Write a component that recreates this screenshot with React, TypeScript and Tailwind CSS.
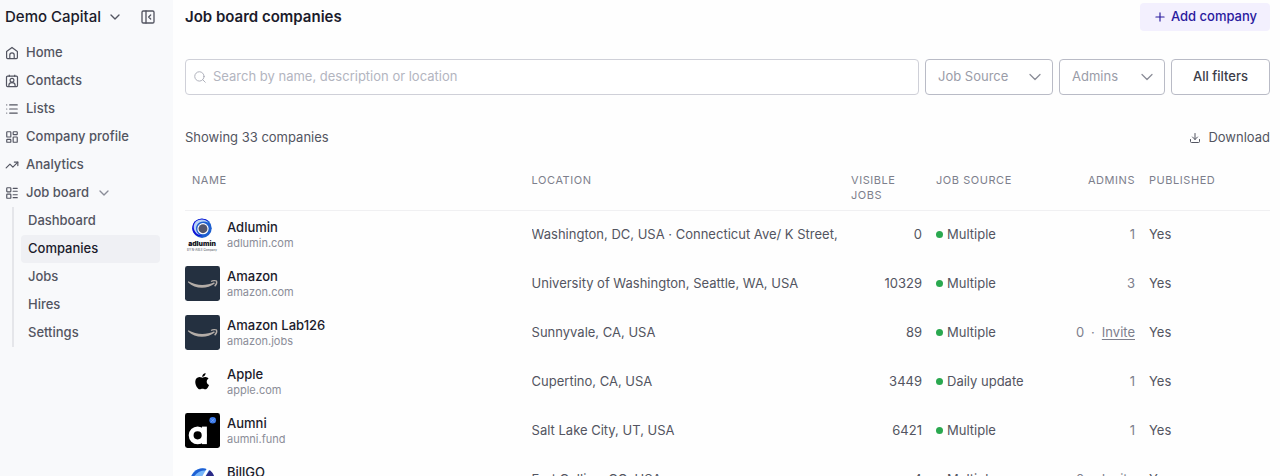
import type { ReactNode } from "react";
import {
  ChevronDown,
  Download,
  LayoutDashboard,
  LayoutList,
  List,
  PanelLeftClose,
  Plus,
  Search,
  TrendingUp,
} from "lucide-react";
import type { LucideIcon } from "lucide-react";

function HomeIcon() {
  return (
    <svg viewBox="0 0 14 14" className="size-3.5" fill="none" stroke="currentColor" strokeWidth="1.2" strokeLinejoin="round">
      <path d="M1.600 5.400 7 1.400l5.400 4v6.200a1 1 0 0 1-1 1H2.600a1 1 0 0 1-1-1Z" />
      <path d="M4.800 12.600V9a2.200 2.200 0 0 1 4.400 0v3.600" />
    </svg>
  );
}

function ContactsIcon() {
  return (
    <svg viewBox="0 0 14 14" className="size-3.5" fill="none" stroke="currentColor" strokeWidth="1.2" strokeLinejoin="round">
      <rect x="1.500" y="2.200" width="11" height="10.400" rx="1" />
      <path d="M4.300 .8v2M9.700 .8v2" />
      <circle cx="7" cy="6.200" r="1.900" />
      <path d="M3.900 12.200V11c0-1.400 1.300-2.300 3.100-2.300s3.100.9 3.100 2.300v1.200" />
    </svg>
  );
}

function LucideGlyph({ icon: Icon }: { icon: LucideIcon }) {
  return <Icon className="size-3.5" strokeWidth={2} />;
}

function AdluminLogo() {
  return (
    <svg viewBox="0 0 36 36" className="size-[35px]">
      <circle cx="17.500" cy="11.500" r="10" fill="#1d5fd0" />
      <path d="M7.500 11.500C7.500 3 17 -1 24.500 4.300 19 2.500 13 4.500 11.500 10c-1 5 2 9 6.500 9.500-5 1.500-10.500-2.500-10.500-8Z" fill="#1010d8" />
      <path d="M11 5c4-3.500 10-3 13 .8-4-2-9-1.500-11.500 2.200-2.500 4-.5 9 3.500 10.700-6-.7-9.500-8.700-5-13.700Z" fill="#b9d3f7" />
      <circle cx="18.500" cy="12" r="5.800" fill="#fff" />
      <circle cx="18.500" cy="12" r="4.600" fill="#53556b" />
      <text x="17.500" y="30" textAnchor="middle" fontSize="7" fontWeight="900" fill="#15151d">adlumin</text>
      <text x="17.500" y="34.500" textAnchor="middle" fontSize="3" fontWeight="600" fill="#777983">BY N-ABLE Company</text>
    </svg>
  );
}

function AmazonLogo() {
  return (
    <svg viewBox="0 0 36 36" className="size-[35px]">
      <rect width="36" height="36" rx="2.500" fill="#243040" />
      <path d="M3.300 15.700c8.400 4.700 18.500 5 26.700 1l.7 1.300C22.500 24.200 10.500 24 3 16.700Z" fill="#b3aca7" />
      <path d="M26.800 16c1.800-1.200 4.700-1.200 5.600-.5.500 1.200-.2 3.700-1.900 5.300" fill="none" stroke="#b3aca7" strokeWidth="1.400" />
    </svg>
  );
}

function AppleLogo() {
  return (
    <svg viewBox="0 0 36 36" className="size-[35px]">
      <g transform="translate(6.500 6.500) scale(.93)">
        <path d="M17.050 20.280c-.98.950-2.050.8-3.080.350-1.090-.46-2.090-.48-3.240 0-1.440.620-2.200.440-3.060-.350C2.790 15.250 3.510 7.590 9.050 7.310c1.350.070 2.290.740 3.080.8 1.180-.24 2.310-.93 3.570-.84 1.510.120 2.650.720 3.400 1.800-3.120 1.870-2.380 5.980.480 7.130-.570 1.500-1.310 2.990-2.540 4.090ZM12.030 7.250C11.880 5.020 13.690 3.180 15.770 3c.290 2.580-2.340 4.500-3.740 4.250Z" />
      </g>
    </svg>
  );
}

function AumniLogo() {
  return (
    <svg viewBox="0 0 36 36" className="size-[35px]">
      <rect width="36" height="36" rx="2.500" fill="#000" />
      <circle cx="13" cy="23" r="6.700" fill="none" stroke="#fff" strokeWidth="5" />
      <rect x="17.500" y="14" width="5" height="18" fill="#fff" />
      <circle cx="28.500" cy="7.500" r="3.400" fill="#3978e8" />
      <path d="m26.500 5.500 4 4m0-4-4 4" stroke="#8bb4f5" strokeWidth=".6" />
    </svg>
  );
}

function BillGoLogo() {
  return (
    <svg viewBox="0 0 36 36" className="size-[35px]">
      <circle cx="18" cy="19" r="12.500" fill="#2f7de6" />
      <path d="M6 17C8 9 15 5 22 7.200L10 23Z" fill="#1f5fd2" />
      <path d="M9.500 14.500c4-5 9-6.500 13-5.500l-7 8Z" fill="#76b6fa" />
      <path d="m18 19 7.500-10.500C29 11 30.500 15 30.500 19Z" fill="#2b2a86" />
      <path d="m15 19 8-13 2.500 1L18 20Z" fill="#fff" />
    </svg>
  );
}

type Company = {
  name: string;
  site: string;
  logo: ReactNode;
  location: string;
  jobs: number;
  source: string;
  admins: number;
};

const companies: Company[] = [
  { name: "Adlumin", site: "adlumin.com", logo: <AdluminLogo />, location: "Washington, DC, USA · Connecticut Ave/ K Street, Washington", jobs: 0, source: "Multiple", admins: 1 },
  { name: "Amazon", site: "amazon.com", logo: <AmazonLogo />, location: "University of Washington, Seattle, WA, USA", jobs: 10329, source: "Multiple", admins: 3 },
  { name: "Amazon Lab126", site: "amazon.jobs", logo: <AmazonLogo />, location: "Sunnyvale, CA, USA", jobs: 89, source: "Multiple", admins: 0 },
  { name: "Apple", site: "apple.com", logo: <AppleLogo />, location: "Cupertino, CA, USA", jobs: 3449, source: "Daily update", admins: 1 },
  { name: "Aumni", site: "aumni.fund", logo: <AumniLogo />, location: "Salt Lake City, UT, USA", jobs: 6421, source: "Multiple", admins: 1 },
  { name: "BillGO", site: "billgo.com", logo: <BillGoLogo />, location: "Fort Collins, CO, USA", jobs: 4, source: "Multiple", admins: 0 },
];

const navItems: { label: string; icon: ReactNode }[] = [
  { label: "Home", icon: <HomeIcon /> },
  { label: "Contacts", icon: <ContactsIcon /> },
  { label: "Lists", icon: <LucideGlyph icon={List} /> },
  { label: "Company profile", icon: <LucideGlyph icon={LayoutDashboard} /> },
  { label: "Analytics", icon: <LucideGlyph icon={TrendingUp} /> },
];

const boardItems = ["Dashboard", "Companies", "Jobs", "Hires", "Settings"];

function Sidebar() {
  return (
    <aside className="w-[173px] shrink-0 bg-[#f8f9fb] text-[13px] font-medium text-[#535561]">
      <div className="flex h-[34px] items-center pr-[17px] pl-[5px]">
        <button className="flex items-center gap-1.5 text-[15px] whitespace-nowrap text-[#1b1b2b]">
          Demo Capital
          <ChevronDown className="size-4 text-[#535561]" />
        </button>
        <button aria-label="Collapse sidebar" className="ml-auto">
          <PanelLeftClose className="size-4" />
        </button>
      </div>
      <nav className="pt-[5px]">
        {navItems.map((item) => (
          <a key={item.label} href="#" className="flex h-7 items-center gap-[7px] pl-[5px]">
            {item.icon}
            {item.label}
          </a>
        ))}
        <button className="flex h-7 items-center gap-[7px] pl-[5px]">
          <LucideGlyph icon={LayoutList} />
          Job board
          <ChevronDown className="size-4 text-[#8b8d98]" />
        </button>
        <div className="mr-[13px] ml-3 border-l-2 border-[#e5e6ea] pl-[7px]">
          {boardItems.map((label) => (
            <a
              key={label}
              href="#"
              className={
                label === "Companies"
                  ? "flex h-7 items-center rounded bg-[#eff0f4] pl-[7px] text-[#1b1b2b]"
                  : "flex h-7 items-center pl-[7px]"
              }
            >
              {label}
            </a>
          ))}
        </div>
      </nav>
    </aside>
  );
}

function FilterSelect({ label, className }: { label: string; className: string }) {
  return (
    <div className={`relative shrink-0 ${className}`}>
      <select aria-label={label} className="h-9 w-full appearance-none rounded border border-[#b9bbc6] bg-white pl-3 text-[13px] text-[#9a9ca8]">
        <option>{label}</option>
      </select>
      <ChevronDown className="pointer-events-none absolute top-2 right-2 size-5 text-[#8b8d98]" strokeWidth={1.5} />
    </div>
  );
}

function CompanyRow({ company }: { company: Company }) {
  return (
    <tr className="h-[49px]">
      <td>
        <div className="flex items-center gap-[7px]">
          {company.logo}
          <div>
            <div className="leading-4 font-medium text-[#1b1b2b]">{company.name}</div>
            <div className="text-[11px] leading-4 text-[#8b8d98]">{company.site}</div>
          </div>
        </div>
      </td>
      <td className="px-[7px]">
        <div className="overflow-hidden whitespace-nowrap">{company.location}</div>
      </td>
      <td className="px-[7px] text-right">{company.jobs}</td>
      <td className="px-[7px]">
        <div className="flex items-center gap-1 whitespace-nowrap">
          <span className="size-[7px] rounded-full bg-[#2aa84f]" />
          {company.source}
        </div>
      </td>
      <td className="px-[7px] text-right whitespace-nowrap text-[#7d7f8c]">
        {company.admins === 0 ? (
          <div className="flex justify-end gap-[7px]">
            <span>0</span>
            <span>·</span>
            <a href="#" className="underline underline-offset-2">Invite</a>
          </div>
        ) : (
          company.admins
        )}
      </td>
      <td className="px-[7px]">Yes</td>
    </tr>
  );
}

export default function App() {
  return (
    <div className="flex h-screen overflow-hidden bg-[#fefefe] font-['Inter',sans-serif] text-[#535561]">
      <Sidebar />
      <main className="min-w-0 flex-1 pr-2.5 pl-3 text-[13px]">
        <header className="flex h-[34px] items-center justify-between">
          <h1 className="text-[15px] font-semibold text-[#1b1b2b]">Job board companies</h1>
          <button className="flex h-7 w-[130px] items-center justify-center gap-1 rounded bg-[#f3f0fe] font-medium text-[#2a1a9e]">
            <Plus className="size-3.5" />
            Add company
          </button>
        </header>

        <div className="mt-[25px] flex gap-1.5">
          <label className="flex h-9 flex-1 items-center gap-1.5 rounded border border-[#cfd0d8] bg-white px-[7px]">
            <Search className="size-3.5 text-[#a5a7b2]" strokeWidth={1.5} />
            <input
              type="text"
              aria-label="Search companies"
              placeholder="Search by name, description or location"
              className="min-w-0 flex-1 outline-none placeholder:text-[#b3b5bf]"
            />
          </label>
          <FilterSelect label="Job Source" className="w-32" />
          <FilterSelect label="Admins" className="w-[106px]" />
          <button className="h-9 w-[99px] shrink-0 rounded border border-[#b9bbc6] bg-white font-medium text-[#3b3c48]">
            All filters
          </button>
        </div>

        <div className="mt-8 flex h-[22px] items-center justify-between">
          <p>Showing 33 companies</p>
          <button className="flex items-center gap-[7px]">
            <Download className="size-3" />
            Download
          </button>
        </div>

        <table className="mt-6 w-full table-fixed border-collapse">
          <thead>
            <tr className="h-[37px] border-b border-[#f0f0f2] align-top text-[11px] leading-[15px] tracking-wider text-[#7d7f8c] uppercase">
              <th className="w-[31.3%] px-[7px] text-left font-normal">Name</th>
              <th className="px-[7px] text-left font-normal">Location</th>
              <th className="w-[85px] px-[7px] text-left font-normal">Visible jobs</th>
              <th className="w-[120px] px-[7px] text-left font-normal">Job source</th>
              <th className="w-[93px] px-[7px] text-right font-normal">Admins</th>
              <th className="w-32 px-[7px] text-left font-normal">Published</th>
            </tr>
          </thead>
          <tbody>
            {companies.map((company) => (
              <CompanyRow key={company.name} company={company} />
            ))}
          </tbody>
        </table>
      </main>
    </div>
  );
}
